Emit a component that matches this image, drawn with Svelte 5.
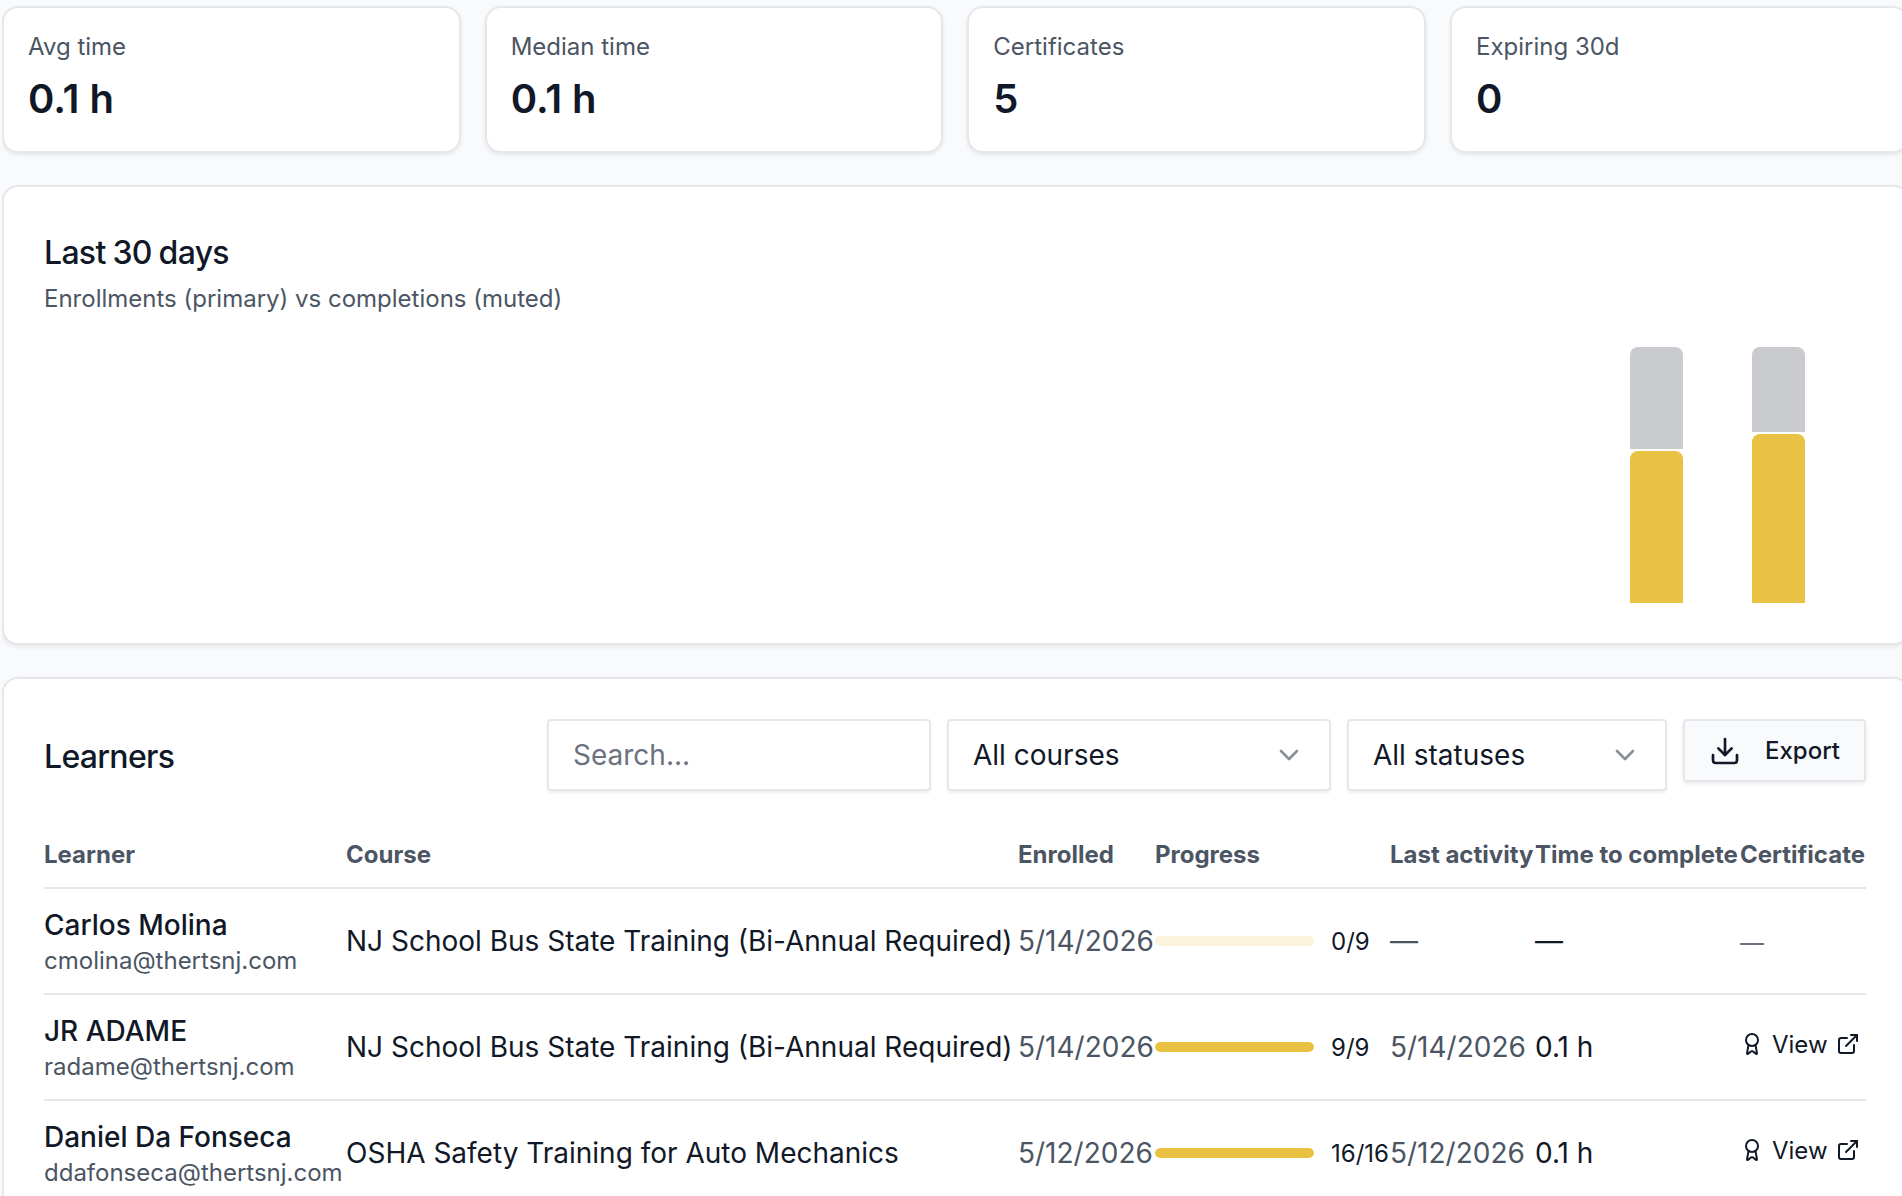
<script>
  const kpis = [
    { label: 'Avg time', value: '0.1 h' },
    { label: 'Median time', value: '0.1 h' },
    { label: 'Certificates', value: '5' },
    { label: 'Expiring 30d', value: '0' }
  ];
  const days = Array.from({ length: 30 }, (_, i) => {
    if (i === 26) return { e: 152, c: 102 };
    if (i === 28) return { e: 169.5, c: 85 };
    return { e: 0, c: 0 };
  });
  const bus = 'NJ School Bus State Training (Bi-Annual Required)';
  const rows = [
    { name: 'Carlos Molina', email: 'cmolina@thertsnj.com', course: bus, enrolled: '5/14/2026', pct: 0, prog: '0/9', last: null, time: null, cert: false },
    { name: 'JR ADAME', email: 'radame@thertsnj.com', course: bus, enrolled: '5/14/2026', pct: 100, prog: '9/9', last: '5/14/2026', time: '0.1 h', cert: true },
    { name: 'Daniel Da Fonseca', email: 'ddafonseca@thertsnj.com', course: 'OSHA Safety Training for Auto Mechanics', enrolled: '5/12/2026', pct: 100, prog: '16/16', last: '5/12/2026', time: '0.1 h', cert: true }
  ];
</script>

<div class="page">
  <section class="kpis">
    {#each kpis as k}
      <div class="card kpi">
        <div class="kpi-label">{k.label}</div>
        <div class="kpi-value">{k.value}</div>
      </div>
    {/each}
  </section>

  <section class="card panel chart-panel">
    <h2>Last 30 days</h2>
    <p class="sub">Enrollments (primary) vs completions (muted)</p>
    <div class="chart">
      {#each days as d}
        <div class="col">
          {#if d.c}<div class="seg muted" style="height:{d.c}px"></div>{/if}
          {#if d.e}<div class="seg primary" style="height:{d.e}px"></div>{/if}
        </div>
      {/each}
    </div>
  </section>

  <section class="card panel learners">
    <div class="toolbar">
      <h2>Learners</h2>
      <div class="controls">
        <div class="field search">Search...</div>
        <div class="field select courses">
          <span>All courses</span>
          <svg viewBox="0 0 24 24" class="ico32 chev"><path d="m6 9 6 6 6-6" /></svg>
        </div>
        <div class="field select statuses">
          <span>All statuses</span>
          <svg viewBox="0 0 24 24" class="ico32 chev"><path d="m6 9 6 6 6-6" /></svg>
        </div>
        <button class="export">
          <svg viewBox="0 0 24 24" class="ico32">
            <path d="M21 15v4a2 2 0 0 1-2 2H5a2 2 0 0 1-2-2v-4" />
            <polyline points="7 10 12 15 17 10" />
            <line x1="12" x2="12" y1="15" y2="3" />
          </svg>
          <span>Export</span>
        </button>
      </div>
    </div>

    <table>
      <colgroup>
        <col class="c1" /><col class="c2" /><col class="c3" /><col class="c4" /><col class="c5" /><col class="c6" /><col class="c7" />
      </colgroup>
      <thead>
        <tr>
          <th>Learner</th><th>Course</th><th>Enrolled</th><th>Progress</th><th>Last activity</th><th>Time to complete</th><th>Certificate</th>
        </tr>
      </thead>
      <tbody>
        {#each rows as r}
          <tr>
            <td class="who">
              <div class="name">{r.name}</div>
              <div class="email">{r.email}</div>
            </td>
            <td>{r.course}</td>
            <td class="muted-text">{r.enrolled}</td>
            <td>
              <div class="progress">
                <div class="track"><div class="fill" style="width:{r.pct}%"></div></div>
                <span class="count">{r.prog}</span>
              </div>
            </td>
            <td class="muted-text">{r.last ?? '—'}</td>
            <td>{r.time ?? '—'}</td>
            <td>
              {#if r.cert}
                <span class="view">
                  <svg viewBox="0 0 24 24" class="ico24">
                    <path d="m15.477 12.89 1.515 8.526a.5.5 0 0 1-.81.47l-3.58-2.687a1 1 0 0 0-1.197 0l-3.586 2.686a.5.5 0 0 1-.81-.469l1.514-8.526" />
                    <circle cx="12" cy="8" r="6" />
                  </svg>
                  <span>View</span>
                  <svg viewBox="0 0 24 24" class="ico24">
                    <path d="M15 3h6v6" /><path d="M10 14 21 3" />
                    <path d="M18 13v6a2 2 0 0 1-2 2H5a2 2 0 0 1-2-2V8a2 2 0 0 1 2-2h6" />
                  </svg>
                </span>
              {:else}
                <span class="dash-cert">—</span>
              {/if}
            </td>
          </tr>
        {/each}
      </tbody>
    </table>
  </section>
</div>

<style>
  :global(html), :global(body) {
    margin: 0;
    height: 1196px;
    overflow: hidden;
    background: #f9fafb;
  }
  .page {
    box-sizing: border-box;
    width: 1910px;
    height: 1196px;
    margin-left: 2px;
    padding-top: 6px;
    overflow: hidden;
    font-family: Inter, "Liberation Sans", sans-serif;
    color: #111827;
    font-size: 28px;
  }
  .card {
    box-sizing: border-box;
    background: #fff;
    border: 2px solid #e5e7eb;
    border-radius: 16px;
    box-shadow: 0 2px 4px rgba(0, 0, 0, 0.08);
  }
  .kpis {
    display: grid;
    grid-template-columns: repeat(4, 458.67px);
    gap: 24px;
    margin-bottom: 32px;
  }
  .kpi {
    height: 147px;
    padding: 23px 24px;
  }
  .kpi-label {
    font-size: 24px;
    line-height: 32px;
    color: #4b5563;
  }
  .kpi-value {
    font-size: 40px;
    line-height: 48px;
    font-weight: 600;
    margin-top: 12px;
  }
  .panel {
    padding: 40px 42px 40px 40px;
    width: 1908px;
  }
  .chart-panel {
    height: 460px;
    padding-top: 42px;
    margin-bottom: 32px;
  }
  h2 {
    margin: 0;
    font-size: 32px;
    line-height: 48px;
    font-weight: 500;
    letter-spacing: -0.7px;
    word-spacing: -1px;
  }
  .sub {
    margin: 6px 0 0;
    font-size: 24px;
    line-height: 32px;
    color: #4b5563;
  }
  .chart {
    display: flex;
    gap: 8px;
    align-items: flex-end;
    height: 256px;
    margin-top: 32px;
  }
  .col {
    flex: 1;
    display: flex;
    flex-direction: column;
    justify-content: flex-end;
    gap: 2px;
  }
  .seg {
    border-radius: 8px 8px 0 0;
  }
  .muted { background: #cacbce; }
  .primary { background: #e9c244; }
  .learners {
    height: 600px;
  }
  .toolbar {
    display: flex;
    justify-content: space-between;
    align-items: flex-start;
    width: 1822px;
  }
  .toolbar h2 {
    margin-top: 14px;
  }
  .controls {
    display: flex;
    gap: 16px;
    align-items: flex-start;
  }
  .field {
    box-sizing: border-box;
    height: 72px;
    background: #fff;
    border: 2px solid #e5e7eb;
    border-radius: 4px;
    box-shadow: 0 2px 3px rgba(0, 0, 0, 0.07);
    padding: 0 24px;
    display: flex;
    align-items: center;
    line-height: 1;
  }
  .search { width: 384px; color: #6b7280; }
  .select { justify-content: space-between; }
  .courses { width: 384px; }
  .statuses { width: 320px; }
  .chev { color: #8b8f96; }
  .ico32 {
    width: 32px;
    height: 32px;
    flex: none;
  }
  .ico24 {
    width: 24px;
    height: 24px;
    flex: none;
  }
  svg {
    fill: none;
    stroke: currentColor;
    stroke-width: 2;
    stroke-linecap: round;
    stroke-linejoin: round;
  }
  .export {
    box-sizing: border-box;
    height: 63px;
    width: 183px;
    display: flex;
    align-items: center;
    gap: 24px;
    padding: 0 24px;
    background: #f9fafb;
    border: 2px solid #e5e7eb;
    border-radius: 4px;
    box-shadow: 0 2px 4px rgba(0, 0, 0, 0.08);
    font: 500 24px Inter, sans-serif;
    color: #111827;
  }
  table {
    width: 1822px;
    table-layout: fixed;
    border-collapse: collapse;
    margin-top: 30px;
  }
  .c1 { width: 302px; }
  .c2 { width: 672px; }
  .c3 { width: 137px; }
  .c4 { width: 235px; }
  .c5 { width: 145px; }
  .c6 { width: 205px; }
  .c7 { width: 126px; }
  th, td {
    padding: 0;
    text-align: left;
    white-space: nowrap;
    border-bottom: 2px solid #e5e7eb;
  }
  th {
    height: 66px;
    font-size: 24px;
    font-weight: 700;
    color: #4b5563;
  }
  td { height: 104px; }
  td.who { height: 102px; padding-top: 2px; }
  .name { font-weight: 500; line-height: 36px; }
  .email {
    font-size: 24px;
    line-height: 32px;
    color: #4b5563;
    margin-top: 2px;
  }
  .muted-text { color: #4b5563; }
  .progress {
    display: flex;
    align-items: center;
    gap: 17px;
  }
  .track {
    width: 159px;
    height: 10.67px;
    border-radius: 6px;
    background: #fbf3da;
    overflow: hidden;
    flex: none;
  }
  .fill { height: 100%; background: #e9c244; border-radius: 6px; }
  .count { font-size: 24px; }
  .view {
    display: inline-flex;
    align-items: center;
    gap: 8px;
    font-size: 24px;
    position: relative;
    top: -1px;
  }
  .dash-cert { font-size: 24px; color: #6b7280; }
</style>
